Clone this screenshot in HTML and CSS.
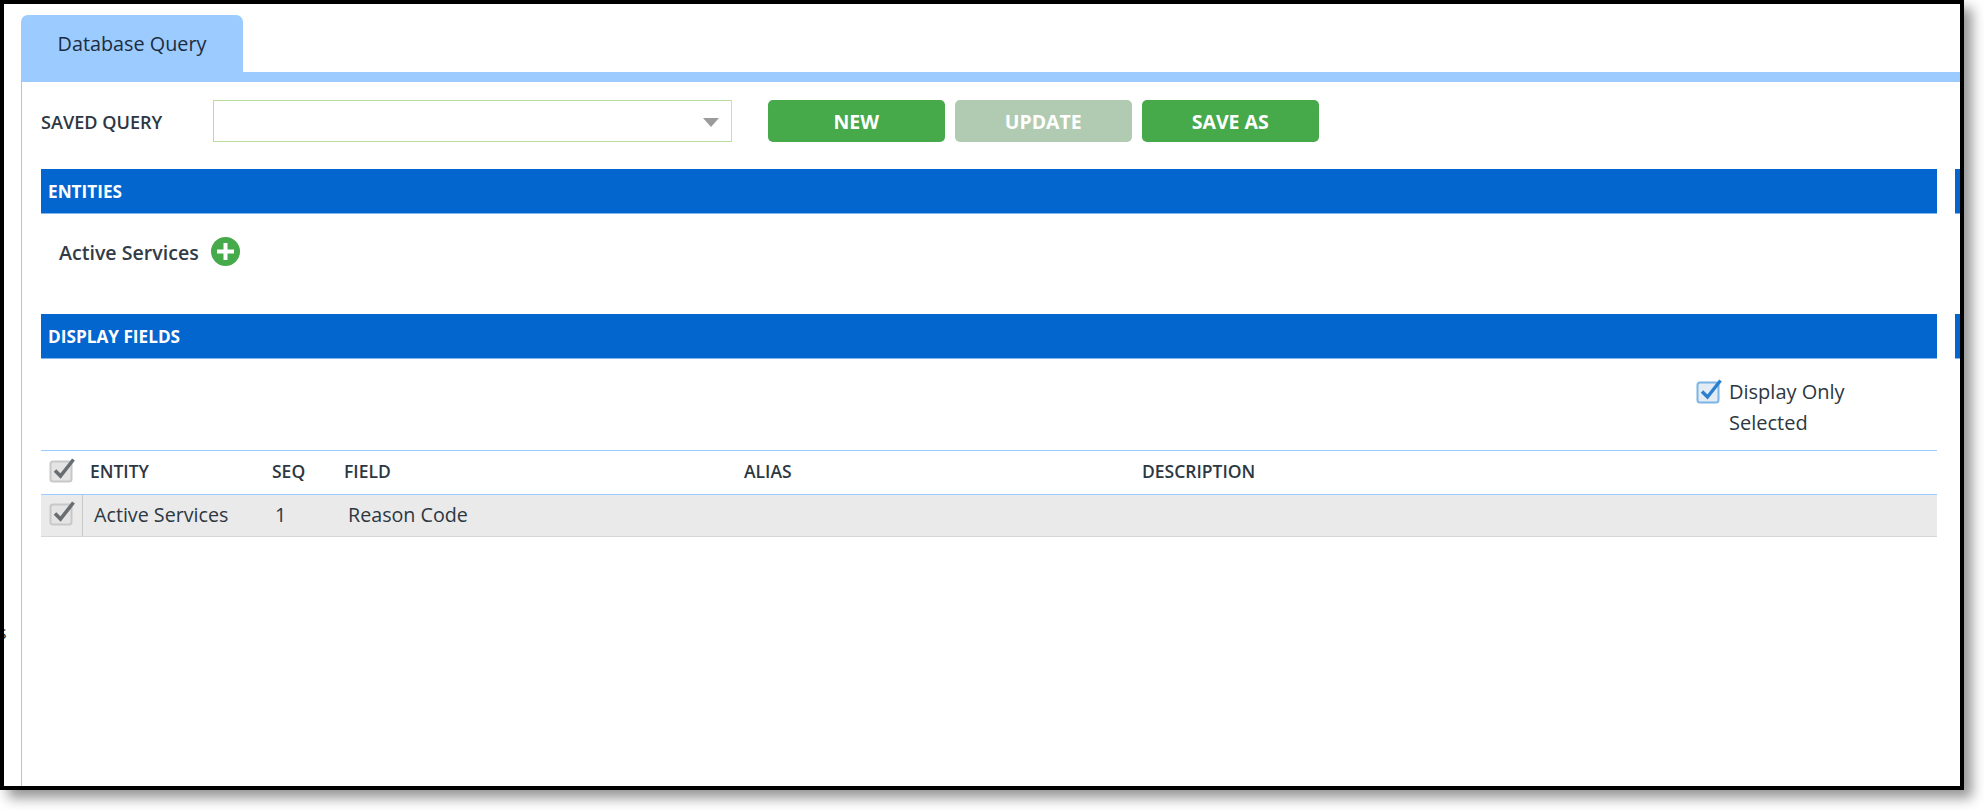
FILE: index.html
```html
<!DOCTYPE html>
<html lang="en">
<head>
<meta charset="utf-8">
<title>Database Query</title>
<link rel="stylesheet" href="styles.css">
</head>
<body>
<div class="frame">
  <span class="stray">s</span>
  <div class="tabs"><div class="tab">Database Query</div></div>
  <div class="panel">
    <div class="toolbar">
      <label class="query-label">SAVED QUERY</label>
      <div class="select"><span class="caret"></span></div>
      <div class="buttons">
        <button class="btn">NEW</button>
        <button class="btn btn-disabled">UPDATE</button>
        <button class="btn">SAVE AS</button>
      </div>
    </div>
    <div class="section-bar"><div class="bar-main">ENTITIES</div><div class="bar-end"></div></div>
    <div class="entities">
      <span class="entity-name">Active Services</span>
      <svg class="add-icon" viewBox="0 0 29 29"><circle cx="14.5" cy="14.5" r="14.5" fill="#46a94a"/><path d="M14.5 6v17M6 14.5h17" stroke="#fff" stroke-width="4" fill="none"/></svg>
    </div>
    <div class="section-bar"><div class="bar-main">DISPLAY FIELDS</div><div class="bar-end"></div></div>
    <div class="content">
      <div class="only-selected">
        <svg class="check" viewBox="0 0 26 26"><rect x="1.5" y="4.5" width="21" height="20" rx="2.5" fill="#e3ecf5" stroke="#7db4e6" stroke-width="2"/><path d="M6 13.5l5.5 5.5L24.5 2.5" stroke="#2b7fd0" stroke-width="3.4" fill="none"/></svg>
        <span class="only-text">Display Only Selected</span>
      </div>
      <div class="grid-row grid-head">
        <div class="cell-check"><svg class="check" viewBox="0 0 26 26"><rect x="1.5" y="4.5" width="21" height="20" rx="2.5" fill="#e4e4e4" stroke="#c8c8c8" stroke-width="2"/><path d="M6 13.5l5.5 5.5L24.5 2.5" stroke="#686d72" stroke-width="3.6" fill="none"/></svg></div>
        <div class="h-entity">ENTITY</div>
        <div class="h-seq">SEQ</div>
        <div class="h-field">FIELD</div>
        <div class="h-alias">ALIAS</div>
        <div>DESCRIPTION</div>
      </div>
      <div class="grid-row grid-body">
        <div class="cell-check cell-divided"><svg class="check" viewBox="0 0 26 26"><rect x="1.5" y="4.5" width="21" height="20" rx="2.5" fill="#e4e4e4" stroke="#c8c8c8" stroke-width="2"/><path d="M6 13.5l5.5 5.5L24.5 2.5" stroke="#686d72" stroke-width="3.6" fill="none"/></svg></div>
        <div class="b-entity">Active Services</div>
        <div class="b-seq">1</div>
        <div class="b-field">Reason Code</div>
      </div>
    </div>
  </div>
</div>
</body>
</html>
```
FILE: styles.css
```css
* { box-sizing: border-box; }
html, body { margin: 0; padding: 0; background: #fff; }
body { height: 810px; overflow: hidden; font-family: "Open Sans", "Noto Sans", sans-serif; color: #2d3742; }
.frame {
  position: relative;
  width: 1964px;
  height: 790px;
  border: 4px solid #000;
  background: #fff;
  display: flex;
  flex-direction: column;
  box-shadow: 8px 8px 12px rgba(0, 0, 0, .42);
}
.stray {
  position: absolute;
  left: -6px;
  top: 616px;
  width: 10px;
  font-size: 18px;
  color: #2d3742;
  clip-path: inset(0 0 0 6px);
}
.tabs { padding: 11px 0 0 17px; height: 68px; flex: none; }
.tab {
  width: 222px;
  height: 57px;
  background: #9bcbff;
  border-radius: 7px 7px 0 0;
  font-size: 19.8px;
  line-height: 57px;
  text-align: center;
  color: #1c2c40;
}
.panel {
  flex: 1;
  margin-left: 17px;
  border-left: 1px solid #9bcbff;
  border-top: 10px solid #9bcbff;
  padding-left: 19px;
}
.toolbar { display: flex; align-items: center; height: 42px; margin-top: 18px; }
.query-label { width: 172px; padding-top: 2px; font-size: 18.1px; font-weight: 600; color: #2d3742; }
.select {
  position: relative;
  width: 519px;
  height: 42px;
  border: 1px solid #b9dd9f;
  border-right-color: #d4d4d4;
  background: #fff;
}
.caret {
  position: absolute;
  right: 12px;
  top: 17px;
  border-left: 8px solid transparent;
  border-right: 8px solid transparent;
  border-top: 9px solid #9b9b9b;
}
.buttons { display: flex; gap: 10.5px; margin-left: 36px; }
.btn {
  width: 176.5px;
  height: 42px;
  padding: 0;
  border: 0;
  border-radius: 5px;
  background: #46a94a;
  color: #fff;
  font-family: inherit;
  font-size: 19.5px;
  font-weight: 700;
}
.btn-disabled { background: #b0cbb2; }
.section-bar { display: flex; gap: 18px; height: 45px; margin-top: 27px; }
.bar-main {
  width: 1896px;
  height: 44px;
  padding-left: 7px;
  background: #0366ce;
  color: #fff;
  font-size: 17.2px;
  font-weight: 700;
  line-height: 45px;
  box-shadow: 0 1px 0 #7fb6ee;
}
.bar-end { width: 5px; height: 44px; background: #0366ce; box-shadow: 0 1px 0 #7fb6ee; }
.entities { display: flex; align-items: center; height: 29px; margin-top: 23px; padding-left: 18px; margin-bottom: 48px; }
.entity-name { padding-top: 2px; font-size: 19.6px; font-weight: 600; color: #333c46; }
.add-icon { width: 29px; height: 29px; margin-left: 12px; }
.content { width: 1896px; }
.only-selected { display: flex; align-items: flex-start; height: 91px; padding: 18px 0 0 1655px; }
.only-selected .check { flex: none; margin-top: 1px; }
.only-text { width: 140px; margin-left: 7px; font-size: 20px; line-height: 31px; margin-top: -1px; }
.check { width: 26px; height: 26px; display: block; }
.grid-row { display: flex; align-items: center; }
.grid-head {
  height: 45px;
  padding-bottom: 3px;
  border-top: 1px solid #9bcbff;
  border-bottom: 1px solid #9bcbff;
  font-size: 17.5px;
  font-weight: 600;
}
.grid-body {
  height: 42px;
  padding-bottom: 2px;
  background: #eaeaea;
  border-bottom: 1px solid #d6d6d6;
  font-size: 19.7px;
}
.cell-check { width: 42px; height: 100%; flex: none; padding: 6px 0 0 8px; }
.grid-body .cell-check { height: 41px; margin-top: 2px; padding-top: 5px; }
.cell-divided { border-right: 1px solid #c9c9c9; }
.h-entity { width: 189px; padding-left: 7px; flex: none; }
.h-seq { width: 72px; flex: none; }
.h-field { width: 400px; flex: none; }
.h-alias { width: 398px; flex: none; }
.b-entity { width: 192px; padding-left: 11px; flex: none; }
.b-seq { width: 73px; flex: none; }
```
